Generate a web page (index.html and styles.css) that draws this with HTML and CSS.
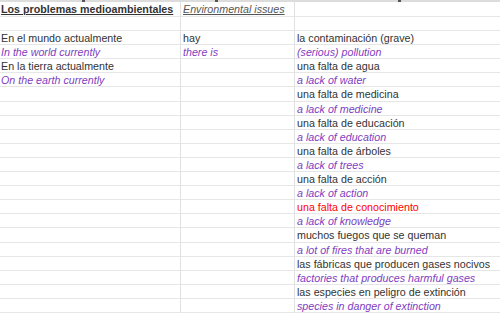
FILE: index.html
```html
<!DOCTYPE html>
<html>
<head>
<meta charset="utf-8">
<link rel="stylesheet" href="styles.css">
</head>
<body>
<div class="strip"><span class="mark m1"></span><span class="mark m2"></span><span class="mark m3"></span></div>
<div class="sheet">
  <div class="cell head"><span class="h1">Los problemas medioambientales</span></div>
  <div class="cell head"><span class="h2">Environmental issues</span></div>
  <div class="cell head last"></div>

  <div class="cell"></div><div class="cell"></div><div class="cell last"></div>

  <div class="cell">En el mundo actualmente</div><div class="cell">hay</div><div class="cell last">la contaminación (grave)</div>
  <div class="cell en">In the world currently</div><div class="cell en">there is</div><div class="cell last en">(serious) pollution</div>
  <div class="cell">En la tierra actualmente</div><div class="cell"></div><div class="cell last">una falta de agua</div>
  <div class="cell en">On the earth currently</div><div class="cell"></div><div class="cell last en">a lack of water</div>
  <div class="cell"></div><div class="cell"></div><div class="cell last">una falta de medicina</div>
  <div class="cell"></div><div class="cell"></div><div class="cell last en">a lack of medicine</div>
  <div class="cell"></div><div class="cell"></div><div class="cell last">una falta de educación</div>
  <div class="cell"></div><div class="cell"></div><div class="cell last en">a lack of education</div>
  <div class="cell"></div><div class="cell"></div><div class="cell last">una falta de árboles</div>
  <div class="cell"></div><div class="cell"></div><div class="cell last en">a lack of trees</div>
  <div class="cell"></div><div class="cell"></div><div class="cell last">una falta de acción</div>
  <div class="cell"></div><div class="cell"></div><div class="cell last en">a lack of action</div>
  <div class="cell"></div><div class="cell"></div><div class="cell last red">una falta de conocimiento</div>
  <div class="cell"></div><div class="cell"></div><div class="cell last en">a lack of knowledge</div>
  <div class="cell"></div><div class="cell"></div><div class="cell last">muchos fuegos que se queman</div>
  <div class="cell"></div><div class="cell"></div><div class="cell last en">a lot of fires that are burned</div>
  <div class="cell"></div><div class="cell"></div><div class="cell last">las fábricas que producen gases nocivos</div>
  <div class="cell"></div><div class="cell"></div><div class="cell last en">factories that produces harmful gases</div>
  <div class="cell"></div><div class="cell"></div><div class="cell last">las especies en peligro de extinción</div>
  <div class="cell"></div><div class="cell"></div><div class="cell last en">species in danger of extinction</div>
</div>
</body>
</html>
```

FILE: styles.css
```css
html, body {
  margin: 0;
  padding: 0;
  background: #ffffff;
  overflow: hidden;
}
body {
  width: 500px;
  height: 314px;
  font-family: "Liberation Sans", Arial, sans-serif;
  font-size: 10.7px;
  color: #333333;
}
.strip {
  height: 2px;
  background: #dcdcdc;
  display: flex;
  align-items: flex-start;
}
.mark {
  display: block;
  width: 3px;
  height: 2px;
  background: #555;
}
.m1 { margin-left: 82px; }
.m2 { margin-left: 130px; }
.m3 { margin-left: 180px; }
.sheet {
  display: grid;
  grid-template-columns: 181px 114px 205px;
  grid-template-rows: 15px;
  grid-auto-rows: 14.1px;
}
.cell {
  box-sizing: border-box;
  border-bottom: 1px solid #e6e6e6;
  border-right: 1px solid #e0e0e0;
  line-height: 13.1px;
  padding-left: 1px;
  padding-top: 1px;
  white-space: nowrap;
  overflow: hidden;
}
.cell:nth-child(3n+2) { padding-left: 2px; }
.cell:nth-child(3n) { padding-left: 2px; }
.last { border-right: none; }
.head {
  line-height: 14px;
  padding-top: 0;
}
.h1 {
  font-weight: bold;
  text-decoration: underline;
  color: #333;
}
.h2 {
  font-style: italic;
  text-decoration: underline;
  color: #555;
}
.en {
  font-style: italic;
  color: #8040bf;
}
.red {
  color: #ff0000;
}
```
